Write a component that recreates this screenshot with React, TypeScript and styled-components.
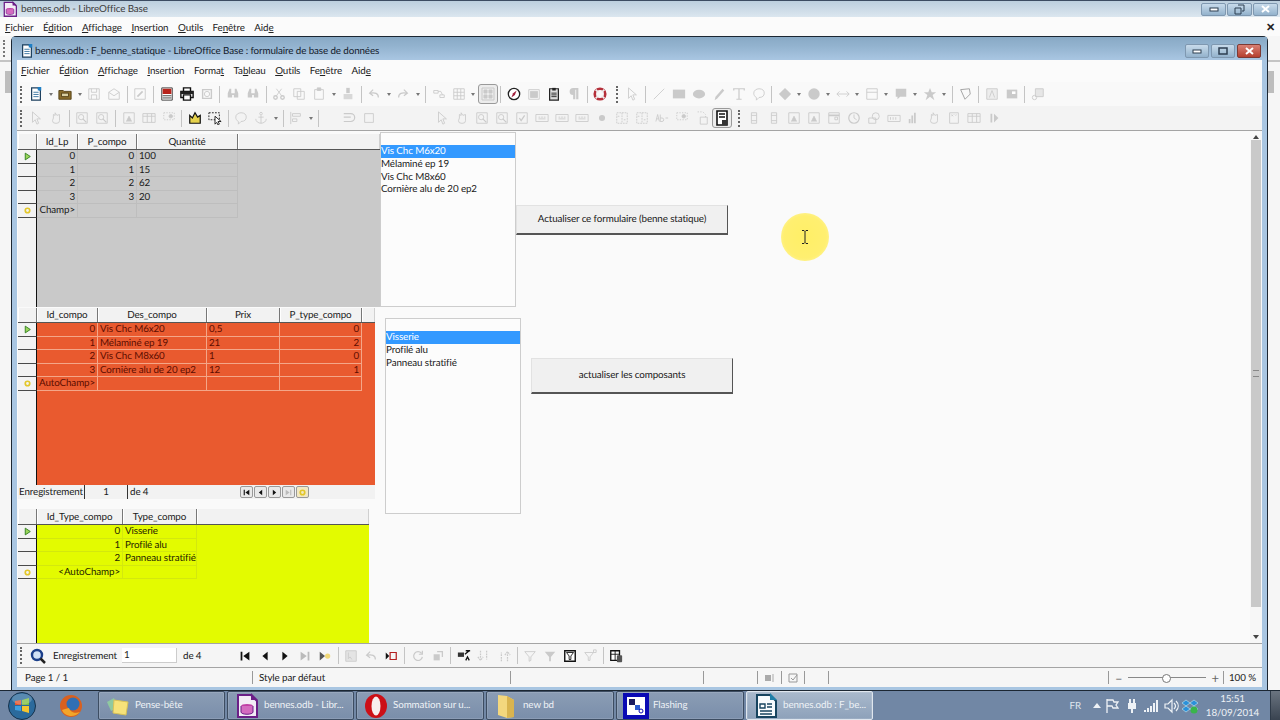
import React from 'react'
import styled, { createGlobalStyle } from 'styled-components'

const GlobalStyle = createGlobalStyle`
  html, body { margin: 0; padding: 0; height: 100%; overflow: hidden; }
  body { font-family: Lato, "Open Sans", "Liberation Sans", sans-serif; font-size: 9.8px; letter-spacing: -0.1px; text-rendering: geometricPrecision; color: #1a1a1a; }
  * { box-sizing: border-box; }
`

const Screen = styled.div`
  width: 1280px;
  height: 720px;
  display: flex;
  flex-direction: column;
  overflow: hidden;
  background: #f4f4f4;
`

/* ---- outer window ---- */
const OuterTitle = styled.div`
  height: 17px;
  flex: none;
  display: flex;
  align-items: center;
  padding: 0 2px 0 3px;
  gap: 4px;
  border-top: 1px solid #3c4c62;
  background: linear-gradient(#bccfde, #dbe6ef);
  color: #3c3c3c;
`
const OuterMenu = styled.div`
  height: 19px;
  flex: none;
  display: flex;
  align-items: center;
  justify-content: space-between;
  padding: 2px 5px 0 5px;
  background: #fbfbfb;
`
const MenuRow = styled.div`
  display: flex;
  align-items: center;
  gap: 9.5px;
`
const MenuItem = styled.span`
  white-space: nowrap;
  color: #222;
`
const CloseMark = styled.span`
  font-weight: 700;
  font-size: 11px;
  color: #222;
  font-family: "Liberation Sans", sans-serif;
`
const OuterBody = styled.div`
  flex: 1;
  min-height: 0;
  display: flex;
`
const SideStrip = styled.div<{ $w: number; $align: string }>`
  width: ${p => p.$w}px;
  flex: none;
  display: flex;
  flex-direction: column;
  align-items: ${p => p.$align};
  background: #f6f6f6;
`
const StripBar = styled.div`
  align-self: stretch;
  height: 26px;
  padding: 4px 0 0 3px;
  border-bottom: 2px solid #c4c4c4;
`
const StripGrip = styled.div`
  width: 2px;
  height: 17px;
  border-left: 2px dotted #777;
`
const StripThumb = styled.div`
  width: 6px;
  height: 22px;
  margin-top: 9px;
  background: #bdbdbd;
`

/* ---- title bar buttons ---- */
const WinButtons = styled.div<{ $gap: number }>`
  margin-left: auto;
  display: flex;
  gap: ${p => p.$gap}px;
`
const WinButton = styled.div<{ $h: number; $close?: boolean; $w: number }>`
  width: ${p => p.$w}px;
  height: ${p => p.$h}px;
  display: flex;
  align-items: center;
  justify-content: center;
  border: 1px solid ${p => (p.$close ? '#7c3a34' : '#7f98b0')};
  border-radius: 2px;
  background: ${p => (p.$close ? 'linear-gradient(#d98074, #b5402f)' : 'linear-gradient(#c8dbeb, #93b2cc)')};
  svg { display: block; }
`

/* ---- inner window ---- */
const InnerWindow = styled.div`
  flex: 1;
  min-width: 0;
  display: flex;
  flex-direction: column;
  border: 1px solid #1c2733;
  border-bottom: none;
  border-radius: 5px 5px 0 0;
  background: #a9c6e2;
  padding: 0 5px 3px 5px;
`
const InnerTitle = styled.div`
  height: 23px;
  flex: none;
  display: flex;
  align-items: center;
  gap: 1px;
  margin: 0 -5px;
  padding: 4px 6px 0 8px;
  background: linear-gradient(#88a9c5 0%, #93b3cf 40%, #a9c6e2 100%);
  color: #14202c;
`
const InnerMenu = styled.div`
  height: 22px;
  flex: none;
  display: flex;
  align-items: center;
  padding: 0 4px;
  background: #fbfbfb;
`
const Toolbar = styled.div<{ $tone: string; $h: number }>`
  height: ${p => p.$h}px;
  flex: none;
  display: flex;
  align-items: center;
  padding-left: 3px;
  background: ${p => p.$tone};
`
const Grip = styled.span`
  width: 2px;
  height: 17px;
  flex: none;
  margin: 0 4px 0 0;
  border-left: 2px dotted #666;
`
const Slot = styled.span<{ $on?: boolean }>`
  width: 20px;
  height: 20px;
  flex: none;
  display: flex;
  align-items: center;
  justify-content: center;
  color: #cacaca;
  border: 1px solid ${p => (p.$on ? '#9a9a9a' : 'transparent')};
  border-radius: 3px;
  background: ${p => (p.$on ? '#ececec' : 'transparent')};
  svg { display: block; }
`
const Arrow = styled.span`
  width: 9px;
  height: 20px;
  flex: none;
  display: flex;
  align-items: center;
  justify-content: center;
  &::before {
    content: '';
    border: 2.5px solid transparent;
    border-top: 3px solid #777;
    margin-top: 3px;
  }
`
const Sep = styled.span`
  width: 6.3px;
  height: 17px;
  flex: none;
  margin: 0;
  background: linear-gradient(#c4c4c4, #c4c4c4) center / 1px 100% no-repeat;
`
const Spacer = styled.span<{ $w: number }>`
  width: ${p => p.$w}px;
  flex: none;
`
const Workspace = styled.div`
  flex: 1;
  min-height: 0;
  display: flex;
  border-top: 1px solid #a4a4a4;
  background: #fafafa;
`
const FormCanvas = styled.div`
  flex: 1;
  position: relative;
  overflow: hidden;
`
const ScrollTrack = styled.div`
  width: 12px;
  flex: none;
  display: flex;
  flex-direction: column;
  align-items: center;
  background: #f7f7f7;
`
const ScrollThumb = styled.div`
  width: 10px;
  height: 467px;
  margin-top: 1px;
  display: flex;
  align-items: center;
  justify-content: center;
  background: #c9c9c9;
  &::before { content: ''; width: 6px; height: 5px; border-top: 1px solid #888; border-bottom: 1px solid #888; }
`
const ScrollArrow = styled.div<{ $up?: boolean }>`
  width: 0;
  margin-top: ${p => (p.$up ? '4px' : 'auto')};
  margin-bottom: ${p => (p.$up ? 0 : 4)}px;
  border: 3px solid transparent;
  ${p => (p.$up ? 'border-bottom: 4px solid #444; border-top-width: 0;' : 'border-top: 4px solid #444; border-bottom-width: 0;')}
`

/* ---- form controls, placed freely on the form ---- */
const Placed = styled.div<{ $x: number; $y: number; $w: number; $h: number }>`
  position: absolute;
  left: ${p => p.$x}px;
  top: ${p => p.$y}px;
  width: ${p => p.$w}px;
  height: ${p => p.$h}px;
`
const GridBox = styled(Placed)<{ $bg: string; $ink: string }>`
  display: flex;
  flex-direction: column;
  background: ${p => p.$bg};
  color: ${p => p.$ink};
`
const HeadRow = styled.div<{ $h: number }>`
  flex: none;
  height: ${p => p.$h}px;
  display: flex;
  background: #f2f2f2;
  color: #1a1a1a;
  border-bottom: 1px solid #555;
`
const HeadCell = styled.div<{ $w: number; $grow?: boolean }>`
  width: ${p => p.$w}px;
  flex: ${p => (p.$grow ? 1 : 'none')};
  display: flex;
  align-items: center;
  justify-content: center;
  border-right: 1px solid ${p => (p.$grow ? '#d0d0d0' : '#777')};
  box-shadow: inset 1px 0 0 #fff;
`
const DataRow = styled.div<{ $h: number }>`
  flex: none;
  height: ${p => p.$h}px;
  display: flex;
`
const Marker = styled.div`
  width: 19px;
  flex: none;
  display: flex;
  align-items: center;
  justify-content: center;
  background: #f3f3f3;
  border-right: 1px solid #111;
  border-bottom: 1px solid #4a4a4a;
`
const Cell = styled.div<{ $w: number; $end?: boolean; $line: string }>`
  width: ${p => p.$w}px;
  flex: none;
  overflow: hidden;
  white-space: nowrap;
  line-height: 12px;
  padding: 0 2px;
  text-align: ${p => (p.$end ? 'right' : 'left')};
  border-right: 1px solid ${p => p.$line};
  border-bottom: 1px solid ${p => p.$line};
`
const GridFill = styled.div`
  flex: 1;
  display: flex;
  min-height: 0;
`
const MarkerFill = styled.div`
  width: 19px;
  flex: none;
  background: #f3f3f3;
  border-right: 1px solid #111;
`
const RecordBar = styled.div`
  height: 14px;
  flex: none;
  display: flex;
  align-items: center;
  background: #f2f2f2;
  color: #1a1a1a;
`
const RecordLabel = styled.span<{ $w: number; $center?: boolean }>`
  width: ${p => p.$w}px;
  flex: none;
  padding-left: ${p => (p.$center ? 0 : 1)}px;
  text-align: ${p => (p.$center ? 'center' : 'left')};
  border-right: 1px solid #333;
  line-height: 14px;
`
const RecordText = styled.span<{ $w: number }>`
  width: ${p => p.$w}px;
  flex: none;
  padding-left: 2px;
`
const RecordBtn = styled.span<{ $muted?: boolean; $warm?: boolean }>`
  width: 13px;
  height: 12px;
  flex: none;
  margin-right: 1px;
  display: flex;
  align-items: center;
  justify-content: center;
  border: 1px solid #999;
  border-radius: 2px;
  background: ${p => (p.$warm ? '#f2e8c2' : '#e9e9e9')};
`
const ListBox = styled(Placed)`
  background: #fcfcfc;
  border: 1px solid #cdcdcd;
  padding-top: 12px;
`
const ListItem = styled.div<{ $sel?: boolean }>`
  height: 12.8px;
  line-height: 12.8px;
  white-space: nowrap;
  color: ${p => (p.$sel ? '#fff' : '#1a1a1a')};
  background: ${p => (p.$sel ? '#3399ff' : 'transparent')};
`
const FormButton = styled(Placed)`
  display: flex;
  align-items: center;
  justify-content: center;
  padding-bottom: 2px;
  background: #f0f0f0;
  border: 1px solid #e2e2e2;
  border-right: 1px solid #555;
  border-bottom: 2px solid #555;
  color: #1a1a1a;
`
const Highlight = styled(Placed)`
  display: flex;
  align-items: center;
  justify-content: center;
  border-radius: 50%;
  background: radial-gradient(circle, #ffef66 0%, #ffef70 62%, #fff6a8 88%, #fdf9d8 100%);
`

/* ---- lower bars ---- */
const NavBar = styled.div`
  height: 25px;
  flex: none;
  display: flex;
  align-items: center;
  padding-left: 3px;
  background: #f5f5f5;
  border-top: 1px solid #a4a4a4;
  border-bottom: 1px solid #a4a4a4;
`
const NavText = styled.span<{ $w: number }>`
  width: ${p => p.$w}px;
  flex: none;
  white-space: nowrap;
`
const NavInput = styled.span`
  width: 55px;
  height: 15px;
  flex: none;
  margin-right: 6px;
  padding-left: 2px;
  line-height: 14px;
  background: #fff;
  border-right: 1px solid #ccc;
  border-bottom: 1px solid #ccc;
`
const StatusBar = styled.div`
  height: 19px;
  flex: none;
  display: flex;
  align-items: center;
  background: #f6f6f6;
`
const StatusCell = styled.div<{ $w: number; $pad?: number }>`
  width: ${p => p.$w}px;
  height: 13px;
  flex: none;
  display: flex;
  align-items: center;
  justify-content: ${p => (p.$pad === undefined ? 'center' : 'flex-start')};
  padding-left: ${p => p.$pad ?? 0}px;
  border-right: 1px solid #999;
  color: #1a1a1a;
  svg { display: block; }
`
const ZoomValue = styled.div`
  width: 39px;
  height: 13px;
  flex: none;
  display: flex;
  align-items: center;
  padding-left: 5px;
  border-left: 1px solid #999;
`
const ZoomCell = styled.div`
  flex: 1;
  height: 13px;
  display: flex;
  align-items: center;
  padding-left: 6px;
  font-size: 13px;
  color: #666;
`
const ZoomTrack = styled.div`
  width: 78px;
  height: 1px;
  margin: 0 5px 0 6px;
  position: relative;
  background: #888;
  &::after {
    content: '';
    position: absolute;
    left: 34px;
    top: -3px;
    width: 7px;
    height: 7px;
    border-radius: 50%;
    border: 1px solid #777;
    background: #fff;
  }
`

/* ---- taskbar ---- */
const Taskbar = styled.div`
  height: 30px;
  flex: none;
  display: flex;
  align-items: center;
  border-top: 1px solid #1c2733;
  background: #7187a5;
  color: #eef2f6;
`
const QuickSlot = styled.div<{ $w: number }>`
  width: ${p => p.$w}px;
  height: 100%;
  flex: none;
  display: flex;
  align-items: center;
  justify-content: center;
`
const TaskButton = styled.div<{ $active?: boolean; $w: number }>`
  width: ${p => p.$w}px;
  height: 29px;
  flex: none;
  margin-right: 2px;
  display: flex;
  align-items: center;
  gap: 2px;
  padding-left: 4px;
  overflow: hidden;
  white-space: nowrap;
  border: 1px solid ${p => (p.$active ? '#dfe6ee' : '#3d4d62')};
  border-radius: 2px;
  background: ${p =>
    p.$active ? 'linear-gradient(#a9b9cc, #8da1ba)' : 'linear-gradient(#8b9db5, #7a8eaa)'};
  box-shadow: inset 0 0 0 1px rgba(255, 255, 255, 0.12);
`
const TaskIcon = styled.span`
  width: 30px;
  flex: none;
  display: flex;
  align-items: center;
  justify-content: center;
  svg { display: block; }
`
const TaskLabel = styled.span`
  margin-top: -2px;
`
const Tray = styled.div`
  flex: 1;
  display: flex;
  align-items: center;
  justify-content: flex-end;
  gap: 3.5px;
  height: 100%;
  svg { display: block; }
`
const TrayLabel = styled.span`
  margin-right: 8px;
  color: #dfe6ee;
`
const Clock = styled.div`
  width: 62px;
  text-align: center;
  line-height: 14px;
  color: #eef2f6;
`
const ShowDesktop = styled.div`
  width: 10px;
  height: 100%;
  margin-left: 3px;
  background: linear-gradient(#6a7480, #394350);
  border-left: 1px solid #2e3a48;
`

/* ---- icons ---- */
const a = { fill: 'none', stroke: 'currentColor' }
const glyphs: Record<string, React.ReactNode> = {
  newdoc: <g><path d="M3 1h7l3 3v11H3z" fill="#fff" stroke="#1d3f5e" strokeWidth="1.4" /><path d="M5 6h6M5 8.500h6M5 11h6" stroke="#2a6a9a" /><path d="M10 0h4v4h-4z" fill="#1f7fc4" /></g>,
  open: <g><path d="M1 4h5l1 1h8v9H1z" fill="#8a6d2c" stroke="#4f3d12" /><path d="M4 7h8v4H4z" fill="#d9cfa2" stroke="#4f3d12" /></g>,
  save: <g {...a}><path d="M2 2h12v12H2z" /><path d="M5 2v4h6V2M5 14V9h6v5" /></g>,
  mail: <g {...a}><path d="M2 6l6-4 6 4v8H2z" /><path d="M2 6l6 4 6-4" /></g>,
  edit: <g {...a}><path d="M2 2h12v12H2z" /><path d="M5 11l6-6" strokeWidth="2" /></g>,
  pdf: <g><path d="M2 1h12v14H2z" fill="#fff" stroke="#333" /><path d="M3 2h10v6H3z" fill="#b8241c" /><path d="M3 10h10M3 12.500h10" stroke="#333" /></g>,
  print: <g><path d="M4 1h8v4H4zM1 5h14v7H1z" fill="#fff" stroke="#111" strokeWidth="1.6" /><path d="M4 9h8v6H4z" fill="#fff" stroke="#111" strokeWidth="1.6" /><path d="M1 5h14v3H1z" fill="#222" /></g>,
  preview: <g {...a}><path d="M3 3h10v10H3z" strokeWidth="1.6" /><circle cx="8" cy="8" r="3" /></g>,
  binoc: <g><path d="M2 7l2-5h2v5h4V2h2l2 5v5H9V9H7v3H2z" fill="currentColor" /></g>,
  cut: <g {...a}><circle cx="4" cy="12" r="2" strokeWidth="1.5" /><circle cx="12" cy="12" r="2" strokeWidth="1.5" /><path d="M5 10l6-8M11 10L5 2" /></g>,
  copy: <g {...a}><path d="M2 2h8v9H2zM6 5h8v9H6z" /></g>,
  paste: <g {...a}><path d="M3 3h10v11H3z" /><path d="M6 1h4v3H6z" fill="currentColor" /></g>,
  brush: <g><path d="M6 1h4v6H6z" fill="currentColor" /><path d="M3 8h10v6H3z" fill="currentColor" opacity=".7" /></g>,
  undo: <g {...a}><path d="M13 12c0-5-4-6-9-5M7 3L3 7l4 3" strokeWidth="1.4" /></g>,
  redo: <g {...a}><path d="M3 12c0-5 4-6 9-5M9 3l4 4-4 3" strokeWidth="1.4" /></g>,
  link: <g {...a}><path d="M2 4h5v3H2zM9 9h5v3H9zM7 5h3l2 4" /></g>,
  table: <g {...a}><path d="M2 2h12v12H2zM2 6h12M2 10h12M6 2v12M10 2v12" /></g>,
  grid: <g {...a}><path d="M2 2h12v12H2z" /><path d="M4 4h3v3H4zM9 4h3v3H9zM4 9h3v3H4zM9 9h3v3H9z" fill="currentColor" /></g>,
  compass: <g><circle cx="8" cy="8" r="6.500" fill="#fff" stroke="#222" strokeWidth="1.5" /><path d="M11 4L9 9 5 12l2-5z" fill="#a11d3a" /></g>,
  gallery: <g {...a}><path d="M2 3h12v11H2z" /><path d="M4 5h8v7H4z" fill="currentColor" /></g>,
  clip: <g><path d="M3 2h10v13H3z" fill="#ddd" stroke="#222" strokeWidth="1.4" /><path d="M6 1h4v3H6z" fill="#222" /><path d="M5 7h6M5 9h6M5 11h6" stroke="#222" /></g>,
  pilcrow: <g><path d="M7 14V9a4 4 0 0 1 0-8h6v13h-2.500V3H9.500v11z" fill="currentColor" /></g>,
  help: <g><circle cx="8" cy="8" r="6" fill="none" stroke="#b5303a" strokeWidth="3" /><path d="M3 3l3 3M13 3l-3 3M3 13l3-3M13 13l-3-3" stroke="#eee" strokeWidth="2" /></g>,
  pointer: <g {...a}><path d="M4 1v12l3-3 2 5 2-1-2-5h4z" /></g>,
  line: <g {...a}><path d="M2 14L14 2" /></g>,
  rect: <g><path d="M1 3h14v10H1z" fill="currentColor" /></g>,
  ellipse: <g><ellipse cx="8" cy="8" rx="7" ry="5" fill="currentColor" /></g>,
  pencil: <g><path d="M3 15l1-4 8-9 2 2-8 9z" fill="currentColor" /></g>,
  text: <g {...a}><path d="M2 4V2h12v2M8 2v12M5 14h6" strokeWidth="1.4" /></g>,
  callout: <g {...a}><path d="M8 2c4 0 6 2 6 5s-2 5-6 5l-3 3v-3c-2-1-3-3-3-5 0-3 3-5 6-5z" /></g>,
  diamond: <g><path d="M8 1l7 7-7 7-7-7z" fill="currentColor" /></g>,
  smile: <g><circle cx="8" cy="8" r="6.500" fill="currentColor" /></g>,
  arrows: <g {...a}><path d="M1 8h14M4 5L1 8l3 3M12 5l3 3-3 3M1 8" /></g>,
  flow: <g {...a}><path d="M2 2h12v12H2zM2 6h12" /></g>,
  bubble: <g><path d="M2 2h12v9H7l-3 3v-3H2z" fill="currentColor" /></g>,
  star: <g><path d="M8 1l2 5h5l-4 3 2 6-5-4-5 4 2-6-4-3h5z" fill="currentColor" /></g>,
  poly: <g stroke="#999" fill="none"><path d="M3 3l10-1 1 6-6 6z" /></g>,
  fontwork: <g {...a}><path d="M2 2h12v12H2z" fill="currentColor" fillOpacity=".25" /><path d="M5 12l3-8 3 8" /></g>,
  imgbox: <g><path d="M2 3h12v10H2z" fill="currentColor" /><path d="M8 5h4v3H8z" fill="#fff" /></g>,
  transform: <g {...a}><path d="M5 2h9v9H5z" fill="currentColor" fillOpacity=".4" /><circle cx="4" cy="12" r="2.500" /></g>,
  hand: <g {...a}><path d="M5 8V4l2 1V2l2 3 3-1v7a3 3 0 0 1-3 3H7a3 3 0 0 1-3-3z" /></g>,
  zoom: <g {...a}><path d="M2 2h12v12H2z" /><circle cx="7" cy="7" r="3" /><path d="M9 9l4 4" strokeWidth="1.5" /></g>,
  crown: <g><path d="M2 14V5l3 3 3-6 3 5 3-2v9z" fill="#e6d24c" stroke="#111" strokeWidth="1.4" /></g>,
  select: <g><path d="M1 2h12v8H1z" fill="none" stroke="#111" strokeDasharray="2 1.500" /><path d="M8 6v9l2-2 1.500 3 1.500-1-1.500-3H15z" fill="#fff" stroke="#111" /></g>,
  anchor: <g {...a}><circle cx="8" cy="3" r="1.500" /><path d="M8 5v9M5 7h6M2 9c0 3 3 5 6 5s6-2 6-5" /></g>,
  align: <g {...a}><path d="M2 1v14M4 3h9v3H4zM4 9h5v3H4z" /></g>,
  wrap: <g {...a}><path d="M2 3h8a4 4 0 0 1 0 9H2M2 7h8" strokeWidth="1.4" /></g>,
  square: <g {...a}><path d="M3 3h10v10H3z" /></g>,
  check: <g {...a}><path d="M2 2h12v12H2z" /><path d="M5 8l2 3 4-6" strokeWidth="1.5" /></g>,
  abtn: <g {...a}><path d="M1 4h14v8H1z" /><path d="M4 7h2M7 7h2M10 7h2M4 9h8" /></g>,
  dot: <g><circle cx="8" cy="8" r="3.500" fill="currentColor" /></g>,
  spin: <g {...a}><path d="M2 2h12v12H2zM8 2v12M3 6h3M10 10h3" strokeDasharray="2 1" /></g>,
  abc: <g><path d="M1 12l2-8 2 8M2 9h2M6 4v8h2a2 2 0 0 0 0-4H6M12 8h3" fill="none" stroke="currentColor" /></g>,
  dots: <g {...a}><path d="M2 2h12v8H2z" strokeDasharray="1.500" /><circle cx="10" cy="6" r="2" fill="currentColor" /></g>,
  tab: <g {...a}><path d="M3 1h6l3 3v3" strokeDasharray="1.500" /><path d="M6 7h8v8H6z" /></g>,
  formdoc: <g><path d="M3 1h10v14H3z" fill="#fff" stroke="#111" strokeWidth="1.6" /><path d="M5 4h6M5 7h6" stroke="#111" strokeWidth="1.4" /><path d="M8 10h5v5H8z" fill="#333" /></g>,
  scroll: <g {...a}><path d="M5 2h6v12H5zM5 5h6M5 11h6" /></g>,
  picture: <g {...a}><path d="M2 2h12v12H2z" /><path d="M5 12l3-6 3 6" fill="currentColor" /></g>,
  win: <g {...a}><path d="M2 2h12v12H2z" /><path d="M2 5h12" strokeWidth="2" /><path d="M9 7h3v3H9z" /></g>,
  clock: <g {...a}><circle cx="8" cy="8" r="6" strokeWidth="1.4" /><path d="M8 4v4l3 2" /></g>,
  pic2: <g {...a}><circle cx="10" cy="6" r="4" /><path d="M2 8h8v6H2z" /></g>,
  num: <g {...a}><path d="M1 5h14v7H1z" /><path d="M4 7v3M7 7v3M10 7v3" /></g>,
  bars: <g {...a}><path d="M6 5v9M9 2v12M3 9v5" strokeWidth="2" /></g>,
  xy: <g {...a}><path d="M3 2h10v12H3z" /><path d="M5 4l2 2M7 4L5 6M9 4l1 1 1-1" /></g>,
  sheet: <g {...a}><path d="M1 3h14v10H1zM1 6h14M6 3v10M11 3v10" /></g>,
  endnav: <g><path d="M4 3v10h2V3zM8 3l5 5-5 5z" fill="currentColor" /></g>,
  lens: <g><circle cx="7" cy="7" r="5" fill="#cfe0f5" stroke="#1b3f8a" strokeWidth="2.400" /><path d="M10.500 10.500L15 15" stroke="#222" strokeWidth="2.500" /></g>,
  first: <g fill="#111"><path d="M3 3h2v10H3zM13 3v10L6 8z" /></g>,
  prev: <g fill="#111"><path d="M11 3v10L5 8z" /></g>,
  next: <g fill="#111"><path d="M5 3v10l6-5z" /></g>,
  last: <g fill="#bbb"><path d="M11 3h2v10h-2zM3 3v10l7-5z" /></g>,
  newrec: <g><path d="M2 3v10l6-5z" fill="#555" /><circle cx="11" cy="8" r="3" fill="#f0d878" /></g>,
  dbrec: <g {...a}><path d="M2 2h12v12H2z" fill="currentColor" fillOpacity=".4" /><path d="M5 4v7l2-2 2 3" /></g>,
  delrec: <g><path d="M2 4v8l4-4z" fill="#111" /><path d="M7 4h7v8H7z" fill="none" stroke="#b32020" strokeWidth="1.4" /></g>,
  refresh: <g {...a}><path d="M13 9a5 5 0 1 1-1-4M13 2v4H9" strokeWidth="1.4" /></g>,
  refresh2: <g><path d="M3 6h7v7H3z" fill="currentColor" /><path d="M7 3h6v6" fill="none" stroke="currentColor" strokeWidth="1.500" /></g>,
  sort: <g><path d="M1 4h7v5H1z" fill="#333" /><path d="M9 6l5-4M10 2h5M10 13l2-4 2 4" fill="none" stroke="#111" strokeWidth="1.5" /></g>,
  down: <g {...a}><path d="M4 2v10M1 9l3 4 3-4M11 2v10" strokeWidth="1.400" strokeDasharray="2 1" /></g>,
  up: <g {...a}><path d="M12 14V4M9 7l3-4 3 4M5 14V4" strokeWidth="1.400" strokeDasharray="2 1" /></g>,
  funnel: <g {...a}><path d="M2 3h12L9 9v4l-2 1V9z" /></g>,
  funnel2: <g><path d="M2 3h12L9 9v5H7V9z" fill="currentColor" /></g>,
  stdfilter: <g><path d="M2 2h12v12H2z" fill="#fff" stroke="#111" strokeWidth="1.6" /><path d="M4 4h8L9 8v4H7V8z" fill="none" stroke="#111" /></g>,
  funnel3: <g {...a}><path d="M2 4h10L8 9v4H6V9z" /><path d="M12 1h3v3h-3z" /></g>,
  datasrc: <g><path d="M2 2h10v11H2z" fill="#fff" stroke="#111" strokeWidth="1.5" /><path d="M2 6h10M7 2v11" stroke="#111" /><rect x="9" y="7" width="6" height="8" rx="1" fill="#555" /></g>,
  sun: <g><circle cx="8" cy="8" r="4" fill="none" stroke="#e3c72a" strokeWidth="3" /></g>,
  play: <g><path d="M4 2v12l9-6z" fill="#9bd65a" stroke="#2f7d1d" strokeWidth="1.6" /></g>,
  flag: <g fill="none" stroke="#eef2f6" strokeWidth="1.300"><path d="M3 1v14M3 2h6l1 2h4l-2 3 2 3H9L8 8H3" /></g>,
  power: <g fill="#eef2f6"><path d="M4 5h8v6H4zM5 1h2v4H5zM9 1h2v4H9zM7 11h2v4H7z" /></g>,
  signal: <g fill="#eef2f6"><path d="M1 12h2v2H1zM4 10h2v4H4zM7 8h2v6H7zM10 5h2v9h-2zM13 2h2v12h-2z" /></g>,
  sound: <g fill="none" stroke="#eef2f6" strokeWidth="1.200"><path d="M2 6h3l4-4v12l-4-4H2zM11 5c2 2 2 4 0 6M13 3c3 3 3 7 0 10" /></g>,
  dropbox: <g><path d="M4 2l4 3-4 3-4-3zM12 2l4 3-4 3-4-3zM4 8l4 3-4 3-4-3zM12 8l4 3-4 3-4-3z" fill="#2b90d9" stroke="#dff" strokeWidth=".5" /><circle cx="12" cy="12" r="3.500" fill="#39b54a" /></g>,
}

const Icon: React.FC<{ name: string; size?: number }> = ({ name, size = 16 }) => (
  <svg width={size} height={size} viewBox="0 0 16 16">{glyphs[name]}</svg>
)

// small language for the toolbars: "v" is a dropdown arrow, "|" a separator, "#" a grip, "_n" a gap, "*x" a pressed icon
const Tools: React.FC<{ spec: string }> = ({ spec }) => (
  <>
    {spec.split(' ').map((t, i) => {
      if (t === 'v') return <Arrow key={i} />
      if (t === '|') return <Sep key={i} />
      if (t === '#') return <Grip key={i} />
      if (t[0] === '_') return <Spacer key={i} $w={Number(t.slice(1))} />
      if (t[0] === '*') return <Slot key={i} $on><Icon name={t.slice(1)} /></Slot>
      return <Slot key={i}><Icon name={t} size={14} /></Slot>
    })}
  </>
)

const toolbarOne = '# newdoc v open v save mail | edit | pdf print preview | binoc binoc | cut copy paste v brush | undo v redo v | link table v *grid | compass gallery clip pilcrow | help _6 # pointer | line rect ellipse pencil text callout | diamond v smile v arrows v flow v bubble v star v | poly | fontwork imgbox | transform'
const toolbarTwo = '# pointer hand | zoom zoom | picture sheet dots | crown select | callout anchor v | align v | _17 wrap square _53 pointer hand zoom zoom check abtn abtn abtn dot spin spin abc dots tab *formdoc _6 # scroll scroll picture picture win clock pic2 num bars hand xy sheet endnav'
const navTools = 'first prev next last newrec | dbrec undo delrec | refresh refresh2 | sort down up | funnel funnel2 stdfilter funnel3 | datasrc'

/* ---- data grids ---- */
type Column = { title: string; width: number; end?: boolean }

const DataGrid: React.FC<{
  x: number; y: number; w: number; h: number; bg: string; ink: string; line: string
  headH: number; rowH: number; columns: Column[]; rows: string[][]; footer?: React.ReactNode
}> = ({ x, y, w, h, bg, ink, line, headH, rowH, columns, rows, footer }) => (
  <GridBox $x={x} $y={y} $w={w} $h={h} $bg={bg} $ink={ink}>
    <HeadRow $h={headH}>
      <HeadCell $w={19} />
      {columns.map(c => <HeadCell key={c.title} $w={c.width}>{c.title}</HeadCell>)}
      <HeadCell $w={0} $grow />
    </HeadRow>
    {rows.map((r, i) => (
      <DataRow key={i} $h={rowH}>
        <Marker>
          {i === 0 && <Icon name="play" size={9} />}
          {i === rows.length - 1 && <Icon name="sun" size={9} />}
        </Marker>
        {r.map((v, j) => <Cell key={j} $w={columns[j].width} $end={columns[j].end} $line={line}>{v}</Cell>)}
      </DataRow>
    ))}
    <GridFill><MarkerFill /></GridFill>
    {footer}
  </GridBox>
)

const u = (before: string, key: string, after: string) => <>{before}<u>{key}</u>{after}</>
const outerMenu = [u('', 'F', 'ichier'), u('É', 'd', 'ition'), u('', 'A', 'ffichage'), u('', 'I', 'nsertion'), u('', 'O', 'utils'), u('Fe', 'n', 'être'), u('Aid', 'e', '')]
const innerMenu = [u('', 'F', 'ichier'), u('É', 'd', 'ition'), u('', 'A', 'ffichage'), u('', 'I', 'nsertion'), u('Forma', 't', ''), u('Ta', 'b', 'leau'), u('', 'O', 'utils'), u('Fe', 'n', 'être'), u('Aid', 'e', '')]

/* ---- window button glyphs ---- */
const MinGlyph = () => <svg width="10" height="6" viewBox="0 0 10 6"><rect x="1" y="2" width="8" height="3" fill="#fff" stroke="#2d3e50" /></svg>
const MaxGlyph = () => <svg width="10" height="10" viewBox="0 0 10 10"><rect x="1" y="2" width="8" height="6" fill="none" stroke="#2d3e50" strokeWidth="1.500" /></svg>
const RestoreGlyph = () => <svg width="11" height="11" viewBox="0 0 11 11"><path d="M4 1h6v6H8M1 4h6v6H1z" fill="none" stroke="#2d3e50" /></svg>
const CloseGlyph = () => <svg width="11" height="8" viewBox="0 0 11 8"><path d="M2 1l7 6M9 1L2 7" stroke="#fff" strokeWidth="2" /></svg>

/* ---- taskbar pictures ---- */
const Orb = () => (
  <svg width="30" height="30" viewBox="0 0 30 30">
    <circle cx="15" cy="15" r="13.500" fill="#2b6a9c" stroke="#16324c" />
    <path d="M8 10l6-1v5H8z" fill="#e2562f" /><path d="M15 9l7-2v7h-7z" fill="#7fbf3f" />
    <path d="M8 15h6v5l-6-1z" fill="#3f9fe0" /><path d="M15 15h7v7l-7-2z" fill="#f5c52e" />
    <ellipse cx="15" cy="8" rx="10" ry="5.500" fill="#fff" opacity=".22" />
  </svg>
)
const Firefox = () => (
  <svg width="26" height="26" viewBox="0 0 26 26">
    <circle cx="13" cy="13" r="11" fill="#d9601f" /><circle cx="15" cy="11" r="6.500" fill="#2f6fb5" />
    <path d="M4 17c2 6 12 9 18 2-5 2-10 0-11-4-3 1-5 1-7 2z" fill="#f2a52a" />
  </svg>
)
const Notes = () => (
  <svg width="24" height="24" viewBox="0 0 24 24">
    <path d="M1 8l7-4 3 10-6 3z" fill="#8fc9a0" /><path d="M8 6l14 2-2 13-13-2z" fill="#f6e27a" stroke="#d8c257" />
  </svg>
)
const BaseDoc = ({ size = 22 }: { size?: number }) => (
  <svg width={size} height={size * 26 / 22} viewBox="0 0 22 26">
    <path d="M2 2h13l6 6v16H2z" fill="#f3edf6" stroke="#6b1f87" strokeWidth="2" /><path d="M15 0l7 7h-7z" fill="#6b1f87" />
    <ellipse cx="11" cy="13" rx="6" ry="2" fill="#c03fa5" /><path d="M5 13v6c0 3 12 3 12 0v-6" fill="#d46bc0" stroke="#6b1f87" />
  </svg>
)
const Opera = () => (
  <svg width="24" height="26" viewBox="0 0 24 26">
    <ellipse cx="12" cy="13" rx="11" ry="12" fill="#cc0f16" /><ellipse cx="12" cy="13" rx="4.500" ry="9.500" fill="#f8eeee" />
  </svg>
)
const Folder = () => (
  <svg width="18" height="26" viewBox="0 0 18 26">
    <path d="M1 2l9 1 7 4v17l-7 1-9-3z" fill="#f3d77e" /><path d="M10 3v22l7-1V7z" fill="#d9b44f" />
  </svg>
)
const Flashing = () => (
  <svg width="26" height="26" viewBox="0 0 26 26">
    <rect width="26" height="26" fill="#0a0ab4" /><rect x="4" y="4" width="18" height="18" fill="#fff" />
    <rect x="6" y="6" width="6" height="6" fill="#1a1a60" /><rect x="12" y="12" width="5" height="5" fill="#2a5ad0" /><circle cx="18" cy="18" r="2" fill="none" stroke="#0a0ab4" />
  </svg>
)
const WriterDoc = () => (
  <svg width="22" height="26" viewBox="0 0 22 26">
    <path d="M2 2h13l6 6v16H2z" fill="#f8fbfd" stroke="#17445f" strokeWidth="2" /><path d="M15 0l7 7h-7z" fill="#1f7fa8" />
    <path d="M5 11h5v4H5zM12 11h5M12 14h5M5 18h12M5 21h12" stroke="#17445f" strokeWidth="1.400" fill="none" />
  </svg>
)

const App: React.FC = () => (
  <Screen>
    <GlobalStyle />
    <OuterTitle>
      <BaseDoc size={14} />
      <span>bennes.odb - LibreOffice Base</span>
      <WinButtons $gap={1}>
        <WinButton $w={25} $h={13}><MinGlyph /></WinButton>
        <WinButton $w={25} $h={13}><RestoreGlyph /></WinButton>
        <WinButton $w={25} $h={13}><CloseGlyph /></WinButton>
      </WinButtons>
    </OuterTitle>
    <OuterMenu>
      <MenuRow>{outerMenu.map((m, i) => <MenuItem key={i}>{m}</MenuItem>)}</MenuRow>
      <CloseMark>✕</CloseMark>
    </OuterMenu>
    <OuterBody>
      <SideStrip $w={11} $align="flex-end">
        <StripBar><StripGrip /></StripBar>
        <StripThumb />
      </SideStrip>
      <InnerWindow>
        <InnerTitle>
          <Icon name="newdoc" size={14} />
          <span>bennes.odb : F_benne_statique - LibreOffice Base : formulaire de base de données</span>
          <WinButtons $gap={2}>
            <WinButton $w={24} $h={14}><MinGlyph /></WinButton>
            <WinButton $w={24} $h={14}><MaxGlyph /></WinButton>
            <WinButton $w={24} $h={14} $close><CloseGlyph /></WinButton>
          </WinButtons>
        </InnerTitle>
        <InnerMenu>
          <MenuRow>{innerMenu.map((m, i) => <MenuItem key={i}>{m}</MenuItem>)}</MenuRow>
        </InnerMenu>
        <Toolbar $tone="#f9f9f9" $h={24}><Tools spec={toolbarOne} /></Toolbar>
        <Toolbar $tone="#f3f3f3" $h={24}><Tools spec={toolbarTwo} /></Toolbar>
        <Workspace>
          <FormCanvas>
            <DataGrid
              x={1} y={3} w={362} h={173} bg="#c9c9c9" ink="#1a1a1a" line="#bebebe" headH={16} rowH={13.5}
              columns={[{ title: 'Id_Lp', width: 41, end: true }, { title: 'P_compo', width: 59, end: true }, { title: 'Quantité', width: 101 }]}
              rows={[['0', '0', '100'], ['1', '1', '15'], ['2', '2', '62'], ['3', '3', '20'], ['Champ>', '', '']]}
            />
            <DataGrid
              x={1} y={177} w={357} h={191} bg="#e95a2f" ink="#5c0d00" line="#f4a688" headH={15} rowH={13.6}
              columns={[{ title: 'Id_compo', width: 61, end: true }, { title: 'Des_compo', width: 109 }, { title: 'Prix', width: 73 }, { title: 'P_type_compo', width: 82, end: true }]}
              rows={[['0', 'Vis Chc M6x20', '0,5', '0'], ['1', 'Mélaminé ep 19', '21', '2'], ['2', 'Vis Chc M8x60', '1', '0'], ['3', 'Cornière alu de 20 ep2', '12', '1'], ['AutoChamp>', '', '', '']]}
              footer={
                <RecordBar>
                  <RecordLabel $w={67}>Enregistrement</RecordLabel>
                  <RecordLabel $w={43} $center>1</RecordLabel>
                  <RecordText $w={112}>de 4</RecordText>
                  <RecordBtn><Icon name="first" size={9} /></RecordBtn>
                  <RecordBtn><Icon name="prev" size={9} /></RecordBtn>
                  <RecordBtn><Icon name="next" size={9} /></RecordBtn>
                  <RecordBtn $muted><Icon name="last" size={9} /></RecordBtn>
                  <RecordBtn $warm><Icon name="sun" size={9} /></RecordBtn>
                </RecordBar>
              }
            />
            <DataGrid
              x={1} y={378} w={351} h={134} bg="#e3fb00" ink="#1f2400" line="#d3e80e" headH={16} rowH={13.6}
              columns={[{ title: 'Id_Type_compo', width: 86, end: true }, { title: 'Type_compo', width: 74 }]}
              rows={[['0', 'Visserie'], ['1', 'Profilé alu'], ['2', 'Panneau stratifié'], ['<AutoChamp>', '']]}
            />
            <ListBox $x={363} $y={1} $w={136} $h={175}>
              <ListItem $sel>Vis Chc M6x20</ListItem>
              <ListItem>Mélaminé ep 19</ListItem>
              <ListItem>Vis Chc M8x60</ListItem>
              <ListItem>Cornière alu de 20 ep2</ListItem>
            </ListBox>
            <ListBox $x={368} $y={187} $w={136} $h={196}>
              <ListItem $sel>Visserie</ListItem>
              <ListItem>Profilé alu</ListItem>
              <ListItem>Panneau stratifié</ListItem>
            </ListBox>
            <FormButton $x={499} $y={74} $w={212} $h={30}>Actualiser ce formulaire (benne statique)</FormButton>
            <FormButton $x={514} $y={227} $w={202} $h={36}>actualiser les composants</FormButton>
            <Highlight $x={764} $y={82} $w={48} $h={48}>
              <svg width="8" height="14" viewBox="0 0 8 14"><path d="M1 .500h2l1 1 1-1h2M4 1.500v11M1 13.500h2l1-1 1 1h2" fill="none" stroke="#222" /></svg>
            </Highlight>
          </FormCanvas>
          <ScrollTrack>
            <ScrollArrow $up />
            <ScrollThumb />
            <ScrollArrow />
          </ScrollTrack>
        </Workspace>
        <NavBar>
          <Grip />
          <Spacer $w={4} />
          <Icon name="lens" />
          <Spacer $w={7} />
          <NavText $w={69}>Enregistrement</NavText>
          <NavInput>1</NavInput>
          <NavText $w={52}>de 4</NavText>
          <Tools spec={navTools} />
        </NavBar>
        <StatusBar>
          <StatusCell $w={236} $pad={8}>Page 1 / 1</StatusCell>
          <StatusCell $w={258} $pad={6}>Style par défaut</StatusCell>
          <StatusCell $w={193} />
          <StatusCell $w={54} />
          <StatusCell $w={24}><svg width="10" height="8" viewBox="0 0 10 8"><rect x="0" y="1" width="6" height="6" fill="#aaa" /><path d="M8 0v8" stroke="#aaa" /></svg></StatusCell>
          <StatusCell $w={23}><svg width="10" height="10" viewBox="0 0 10 10"><path d="M1 1h8v8H1zM3 5l2 2 4-5" fill="none" stroke="#999" /></svg></StatusCell>
          <StatusCell $w={24} />
          <StatusCell $w={280} />
          <ZoomCell>
            <span>–</span>
            <ZoomTrack />
            <span>+</span>
          </ZoomCell>
          <ZoomValue>100 %</ZoomValue>
        </StatusBar>
      </InnerWindow>
      <SideStrip $w={12} $align="flex-start">
        <StripBar />
        <StripThumb />
      </SideStrip>
    </OuterBody>
    <Taskbar>
      <QuickSlot $w={44}><Orb /></QuickSlot>
      <QuickSlot $w={54}><Firefox /></QuickSlot>
      <TaskButton $w={127}><TaskIcon><Notes /></TaskIcon><TaskLabel>Pense-bête</TaskLabel></TaskButton>
      <TaskButton $w={127}><TaskIcon><BaseDoc /></TaskIcon><TaskLabel>bennes.odb - Libr...</TaskLabel></TaskButton>
      <TaskButton $w={128}><TaskIcon><Opera /></TaskIcon><TaskLabel>Sommation sur u...</TaskLabel></TaskButton>
      <TaskButton $w={128}><TaskIcon><Folder /></TaskIcon><TaskLabel>new bd</TaskLabel></TaskButton>
      <TaskButton $w={128}><TaskIcon><Flashing /></TaskIcon><TaskLabel>Flashing</TaskLabel></TaskButton>
      <TaskButton $w={127} $active><TaskIcon><WriterDoc /></TaskIcon><TaskLabel>bennes.odb : F_be...</TaskLabel></TaskButton>
      <Tray>
        <TrayLabel>FR</TrayLabel>
        <svg width="8" height="5" viewBox="0 0 8 5"><path d="M4 0l4 5H0z" fill="#eef2f6" /></svg>
        <Icon name="flag" />
        <Icon name="power" />
        <Icon name="signal" />
        <Icon name="sound" />
        <Icon name="dropbox" />
        <Clock>15:51<br />18/09/2014</Clock>
        <ShowDesktop />
      </Tray>
    </Taskbar>
  </Screen>
)

export default App
